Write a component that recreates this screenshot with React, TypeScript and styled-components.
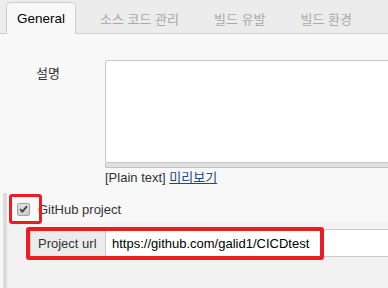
import React from 'react';
import styled, { createGlobalStyle } from 'styled-components';

const GlobalStyle = createGlobalStyle`
  html, body {
    margin: 0;
    padding: 0;
    background: #f8f8f8;
    overflow: hidden;
  }
  body {
    font-family: "Liberation Sans", Arial, "Noto Sans CJK KR", sans-serif;
    font-size: 13px;
    color: #333;
  }
`;

const tabs = ['General', '소스 코드 관리', '빌드 유발', '빌드 환경'];

const App: React.FC = () => (
  <Page>
    <GlobalStyle />
    <TabBar>
      {tabs.map((tab, i) => (
        <Tab key={tab} active={i === 0}>{tab}</Tab>
      ))}
    </TabBar>

    <Content>
      <DescRow>
        <FieldLabel>설명</FieldLabel>
        <div>
          <TextArea readOnly />
          <Grip />
          <Preview>
            [Plain text] <PreviewLink href="#">미리보기</PreviewLink>
          </Preview>
        </div>
      </DescRow>

      <OptionalBlock>
        <CheckRow>
          <CheckBox>
            <svg width="9" height="8" viewBox="0 0 9 8">
              <path d="M1 4.2 L3.4 6.6 L8 1.2" fill="none" stroke="#444" strokeWidth="1.9" />
            </svg>
            <Highlight top={-10} left={-9} width={33} height={30} border={3.5} />
          </CheckBox>
          <CheckLabel>GitHub project</CheckLabel>
        </CheckRow>

        <Nested>
          <UrlRow>
            <UrlLabel>Project url</UrlLabel>
            <UrlInput readOnly value="https://github.com/galid1/CICDtest" />
            <Highlight top={-2} left={-4} width={298} height={33} border={4} />
          </UrlRow>
        </Nested>
      </OptionalBlock>
    </Content>
  </Page>
);

const Page = styled.div`
  width: 388px;
  height: 288px;
  overflow: hidden;
  display: flex;
  flex-direction: column;
`;

const TabBar = styled.div`
  display: flex;
  align-items: flex-end;
  gap: 13px;
  height: 33px;
  padding-left: 6px;
  background: #ececec;
  border-bottom: 1px solid #cfcfcf;
`;

const Tab = styled.div<{ active?: boolean }>`
  display: flex;
  align-items: center;
  height: ${({ active }) => (active ? '31px' : '32px')};
  padding: 0 10px;
  margin-bottom: -1px;
  font-size: ${({ active }) => (active ? '13.5px' : '13px')};
  color: ${({ active }) => (active ? '#000' : '#aaa')};
  white-space: nowrap;
  background: ${({ active }) => (active ? '#f8f8f8' : 'transparent')};
  border: 1px solid ${({ active }) => (active ? '#cfcfcf' : 'transparent')};
  border-bottom: none;
  border-radius: 5px 5px 0 0;
`;

const Content = styled.div`
  flex: 1;
  display: flex;
  flex-direction: column;
  padding-top: 26px;
`;

const DescRow = styled.div`
  display: grid;
  grid-template-columns: 105px 300px;
`;

const FieldLabel = styled.div`
  padding: 6px 0 0 36px;
  font-size: 13px;
  line-height: 16px;
  color: #333;
`;

const TextArea = styled.textarea`
  display: block;
  box-sizing: border-box;
  width: 300px;
  height: 103px;
  margin: 0;
  padding: 4px;
  resize: none;
  background: #fff;
  border: 1px solid #c8c8c8;
  border-radius: 2px;
  outline: none;
`;

const Grip = styled.div`
  box-sizing: border-box;
  width: 300px;
  height: 5px;
  background: #e0e0e0;
  border: 1px solid #c4c4c4;
  border-top: none;
`;

const Preview = styled.div`
  margin-top: 2px;
  line-height: 16px;
  color: #333;
`;

const PreviewLink = styled.a`
  color: #204a87;
  text-decoration: underline;
`;

const OptionalBlock = styled.div`
  flex: 1;
  display: flex;
  flex-direction: column;
  margin: 7px 0 0 3px;
  border-left: 4px solid #dcdcdc;
`;

const CheckRow = styled.div`
  display: flex;
  align-items: center;
  height: 30px;
  padding-left: 10px;
`;

const CheckBox = styled.span`
  position: relative;
  display: flex;
  align-items: center;
  justify-content: center;
  box-sizing: border-box;
  width: 13px;
  height: 13px;
  margin-top: 2px;
  background: linear-gradient(#e2e2e2, #cdcdcd);
  border: 1px solid #a0a0a0;
  border-radius: 2px;
`;

const CheckLabel = styled.span`
  margin-left: 8px;
  margin-top: 2px;
  font-size: 13px;
  color: #333;
`;

const Highlight = styled.span<{ top: number; left: number; width: number; height: number; border: number }>`
  position: absolute;
  top: ${({ top }) => top}px;
  left: ${({ left }) => left}px;
  width: ${({ width }) => width}px;
  height: ${({ height }) => height}px;
  box-sizing: border-box;
  border: ${({ border }) => border}px solid #ed1c24;
  border-radius: 3px;
  pointer-events: none;
`;

const Nested = styled.div`
  flex: 1;
  background: #f2f2f2;
  padding: 6px 0 0 23px;
`;

const UrlRow = styled.div`
  position: relative;
  display: flex;
  height: 28px;
`;

const UrlLabel = styled.div`
  display: flex;
  align-items: center;
  flex-shrink: 0;
  box-sizing: border-box;
  width: 75px;
  padding-left: 7px;
  background: #ececec;
  border: 1px solid #ccc;
  border-right: none;
  color: #333;
  white-space: nowrap;
`;

const UrlInput = styled.input`
  flex-shrink: 0;
  box-sizing: border-box;
  width: 320px;
  height: 28px;
  margin: 0;
  padding: 0 6px;
  background: #fff;
  border: 1px solid #ccc;
  font-family: inherit;
  font-size: 13px;
  color: #000;
  outline: none;
`;

export default App;
